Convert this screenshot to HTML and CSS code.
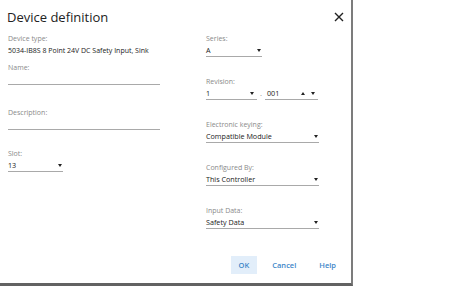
FILE: index.html
```html
<!DOCTYPE html>
<html lang="en">
<head>
    <meta charset="UTF-8">
    <title>Device definition</title>
    <link rel="stylesheet" href="styles.css">
</head>
<body>
    <div class="dialog">
        <header class="dialog-header">
            <h1 class="dialog-title">Device definition</h1>
            <button class="close-btn" aria-label="Close">
                <svg width="10" height="10" viewBox="0 0 10 10">
                    <path d="M1 1 L9 9 M9 1 L1 9" stroke="#222" stroke-width="1.4" fill="none"/>
                </svg>
            </button>
        </header>

        <div class="dialog-body">
            <div class="col col-left">
                <div class="field field-device">
                    <div class="field-label">Device type:</div>
                    <div class="field-text">5034-IB8S 8 Point 24V DC Safety Input, Sink</div>
                </div>

                <div class="field field-name">
                    <div class="field-label">Name:</div>
                    <div class="text-input"></div>
                </div>

                <div class="field field-desc">
                    <div class="field-label">Description:</div>
                    <div class="text-input"></div>
                </div>

                <div class="field field-slot">
                    <div class="field-label">Slot:</div>
                    <div class="select select-slot">
                        <span class="select-value">13</span>
                        <span class="caret"></span>
                    </div>
                </div>
            </div>

            <div class="col col-right">
                <div class="field">
                    <div class="field-label">Series:</div>
                    <div class="select select-series">
                        <span class="select-value">A</span>
                        <span class="caret"></span>
                    </div>
                </div>

                <div class="field">
                    <div class="field-label">Revision:</div>
                    <div class="revision-row">
                        <div class="select select-major">
                            <span class="select-value">1</span>
                            <span class="caret"></span>
                        </div>
                        <span class="revision-dot">.</span>
                        <div class="select spinner">
                            <span class="select-value">001</span>
                            <span class="spin-arrows">
                                <span class="caret caret-up"></span>
                                <span class="caret"></span>
                            </span>
                        </div>
                    </div>
                </div>

                <div class="field">
                    <div class="field-label">Electronic keying:</div>
                    <div class="select">
                        <span class="select-value">Compatible Module</span>
                        <span class="caret"></span>
                    </div>
                </div>

                <div class="field">
                    <div class="field-label">Configured By:</div>
                    <div class="select">
                        <span class="select-value">This Controller</span>
                        <span class="caret"></span>
                    </div>
                </div>

                <div class="field">
                    <div class="field-label">Input Data:</div>
                    <div class="select">
                        <span class="select-value">Safety Data</span>
                        <span class="caret"></span>
                    </div>
                </div>
            </div>
        </div>

        <footer class="dialog-footer">
            <button class="dlg-btn dlg-btn-primary">OK</button>
            <button class="dlg-btn">Cancel</button>
            <button class="dlg-btn">Help</button>
        </footer>
    </div>
</body>
</html>
```

FILE: styles.css
```css
:root {
    --text-color: #222222;
    --label-color: #8a8a8a;
    --line-color: #a9a9a9;
    --link-color: #3d86c8;
    --primary-bg: #e2eefa;
}

* {
    margin: 0;
    padding: 0;
    box-sizing: border-box;
}

body {
    font-family: 'Open Sans', 'Noto Sans', sans-serif;
    background-color: #ffffff;
    color: var(--text-color);
    width: 474px;
    height: 286px;
    overflow: hidden;
}

.dialog {
    width: 353px;
    height: 286px;
    background-color: #ffffff;
    border-right: 2px solid #7c7c7c;
    border-bottom: 3px solid #626262;
    display: flex;
    flex-direction: column;
}

.dialog-header {
    height: 34px;
    padding: 0 7px;
    display: flex;
    align-items: center;
    justify-content: space-between;
}

.dialog-title {
    font-size: 13px;
    font-weight: 400;
    color: #222;
    line-height: 20px;
}

.close-btn {
    border: none;
    background: none;
    width: 10px;
    height: 10px;
    display: flex;
    cursor: pointer;
}

.dialog-body {
    flex: 1;
    display: flex;
    padding: 0 8px;
}

.col-left {
    width: 152px;
}

.col-right {
    width: 113px;
    margin-left: 46px;
}

.field {
    margin-top: 20px;
}

.field:first-child {
    margin-top: 0;
}

.field-label {
    font-size: 7px;
    line-height: 10px;
    height: 10px;
    color: var(--label-color);
}

.field-text {
    font-size: 7px;
    line-height: 14px;
    height: 14px;
    color: var(--text-color);
}

.field-name {
    margin-top: 5px;
}

.field-desc {
    margin-top: 23px;
}

.field-slot {
    margin-top: 19px;
}

.text-input {
    height: 12px;
    border-bottom: 1px solid var(--line-color);
}

.select {
    height: 13px;
    border-bottom: 1px solid var(--line-color);
    display: flex;
    align-items: center;
    justify-content: space-between;
    padding-right: 1px;
    font-size: 7.2px;
    line-height: 12px;
    color: var(--text-color);
}

.select-value {
    white-space: nowrap;
}

.select-slot {
    width: 55px;
}

.select-series {
    width: 56px;
}

.revision-row {
    display: flex;
}

.select-major {
    width: 51px;
    padding-right: 3px;
}

.revision-dot {
    width: 8px;
    text-align: center;
    font-size: 7.5px;
    line-height: 12px;
    color: var(--label-color);
}

.spinner {
    width: 53px;
    padding-left: 2px;
    padding-right: 3px;
}

.spin-arrows {
    display: flex;
    gap: 6px;
}

.caret {
    width: 0;
    height: 0;
    border-left: 2.5px solid transparent;
    border-right: 2.5px solid transparent;
    border-top: 3px solid #222;
}

.caret-up {
    border-top: none;
    border-bottom: 3px solid #222;
}

.dialog-footer {
    display: flex;
    justify-content: flex-end;
    gap: 7px;
    padding: 0 7px 9px 0;
}

.dlg-btn {
    height: 18px;
    padding: 0 8px;
    border: none;
    background: none;
    font-family: inherit;
    font-size: 7.5px;
    font-weight: 600;
    color: var(--link-color);
    cursor: pointer;
}

.dlg-btn-primary {
    background-color: var(--primary-bg);
}
```
